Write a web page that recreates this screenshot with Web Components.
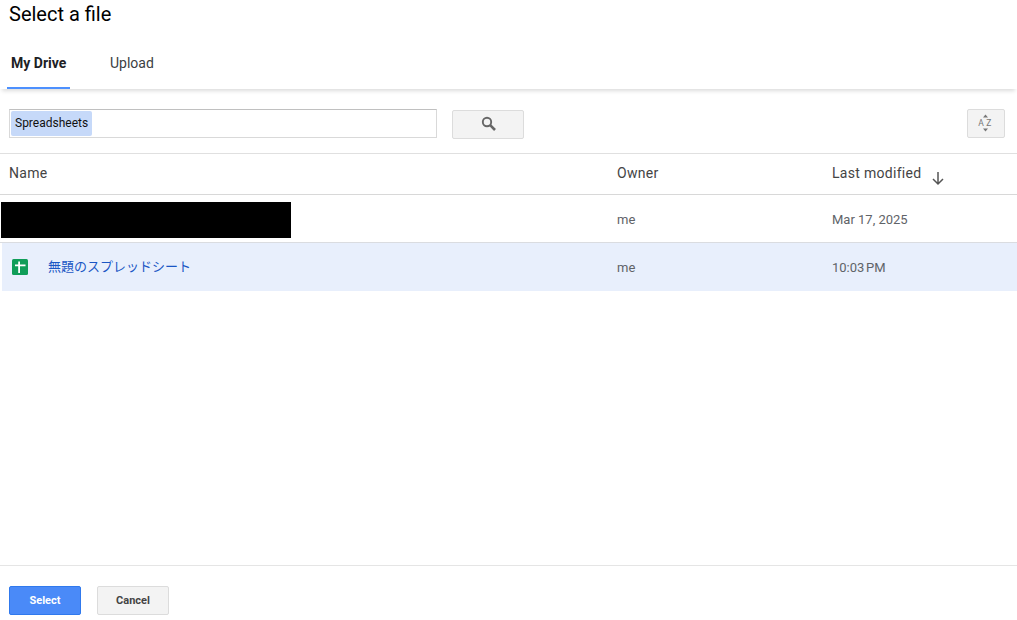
<!DOCTYPE html>
<html>
<head>
<meta charset="utf-8">
<title>Select a file</title>
<style>
    html, body { margin: 0; padding: 0; height: 100%; overflow: hidden; background: #fff; }
    body { font-family: Roboto, "Noto Sans CJK JP", sans-serif; }
</style>
</head>
<body>
<picker-dialog>
    <picker-tabs slot="tabs"></picker-tabs>
    <picker-toolbar slot="toolbar"></picker-toolbar>
    <picker-header slot="list"></picker-header>
    <picker-row slot="list" owner="me" modified="Mar 17, 2025" redacted></picker-row>
    <picker-row slot="list" owner="me" modified="10:03&#8239;PM" selected>無題のスプレッドシート</picker-row>
</picker-dialog>

<script>
// Web Components

class PickerDialog extends HTMLElement {
    connectedCallback() {
        let shadowRoot = this.attachShadow({mode: 'open'});
        shadowRoot.innerHTML = `
            <style>
                :host { display: flex; flex-direction: column; height: 620px; color: #000; }
                .title { height: 28px; padding-left: 9px; font-size: 20px; line-height: 28px; flex: none; }
                .list { flex: 1; }
                .footer { flex: none; height: 55px; box-sizing: border-box; border-top: 1px solid #e5e5e5; padding: 20px 0 0 9px; display: flex; gap: 16px; }
                button {
                    width: 72px; height: 29px; box-sizing: border-box; border-radius: 2px; padding: 0;
                    font: bold 11px Roboto, sans-serif; cursor: pointer;
                }
                .primary { background: #4a8af8; border: 1px solid #3079ed; color: #fff; }
                .plain { background: #f3f3f3; border: 1px solid #dcdcdc; color: #444; }
            </style>
            <div class="title">Select a file</div>
            <slot name="tabs"></slot>
            <slot name="toolbar"></slot>
            <div class="list"><slot name="list"></slot></div>
            <div class="footer">
                <button class="primary">Select</button>
                <button class="plain">Cancel</button>
            </div>
        `;
    }
}

class PickerTabs extends HTMLElement {
    connectedCallback() {
        let shadowRoot = this.attachShadow({mode: 'open'});
        shadowRoot.innerHTML = `
            <style>
                :host {
                    display: flex; height: 61px; padding-left: 7px; box-sizing: border-box; flex: none;
                    font-size: 14px; color: #3c4043;
                    box-shadow: 0 4px 4px -2px rgba(0,0,0,.14);
                    position: relative;
                }
                .tab { height: 61px; box-sizing: border-box; padding: 27px 4px 0; line-height: 16px; white-space: nowrap; }
                .active { width: 63px; font-weight: bold; color: #202124; border-bottom: 2px solid #4d90fe; }
                .other { margin-left: 36px; }
            </style>
            <div class="tab active">My Drive</div>
            <div class="tab other">Upload</div>
        `;
    }
}

class PickerToolbar extends HTMLElement {
    connectedCallback() {
        let shadowRoot = this.attachShadow({mode: 'open'});
        shadowRoot.innerHTML = `
            <style>
                :host {
                    display: flex; align-items: flex-start; height: 64px; box-sizing: border-box; flex: none;
                    padding: 20px 12px 0 9px;
                }
                .input {
                    width: 428px; height: 29px; box-sizing: border-box; padding: 1px;
                    border: 1px solid #d9d9d9; border-top-color: #c0c0c0;
                }
                .chip {
                    display: inline-block; width: 81px; height: 25px; box-sizing: border-box;
                    padding-left: 4px; background: #c6d9f9; border-radius: 2px;
                    font-size: 12px; line-height: 24px; color: #111;
                }
                .btn {
                    box-sizing: border-box; height: 29px; background: #f3f3f3; border: 1px solid #dcdcdc; border-radius: 2px;
                    display: flex; align-items: center; justify-content: center;
                }
                .search { width: 72px; margin: 1px 0 0 15px; }
                .search svg { margin: -1px 0 0 1px; }
                .sort { width: 38px; margin-left: auto; }
            </style>
            <div class="input"><span class="chip">Spreadsheets</span></div>
            <div class="btn search">
                <svg width="18" height="18" viewBox="0 0 18 18">
                    <circle cx="7" cy="7" r="4.2" fill="none" stroke="#666" stroke-width="1.9"/>
                    <path d="M10.2 10.2 L15 15" stroke="#666" stroke-width="2.6" fill="none"/>
                </svg>
            </div>
            <div class="btn sort">
                <svg width="22" height="24" viewBox="0 0 22 24">
                    <path d="M10.5 2.5 L13 5.5 H8 Z M10.5 19.5 L13 16.5 H8 Z" fill="#777"/>
                    <text x="11" y="14" text-anchor="middle" font-family="Roboto, sans-serif" font-size="8.5" letter-spacing="2.5" fill="#777">AZ</text>
                </svg>
            </div>
        `;
    }
}

class PickerHeader extends HTMLElement {
    connectedCallback() {
        let shadowRoot = this.attachShadow({mode: 'open'});
        shadowRoot.innerHTML = `
            <style>
                :host {
                    display: grid; grid-template-columns: 617px 215px 1fr; height: 42px; box-sizing: border-box;
                    border-top: 1px solid #e0e0e0; border-bottom: 1px solid #d8d8d8;
                    font-size: 14px; color: #444; line-height: 16px; letter-spacing: .3px;
                }
                div { padding-top: 11px; }
                .name { padding-left: 9px; }
                .mod { display: flex; }
                svg { margin: 3px 0 0 6px; }
            </style>
            <div class="name">Name</div>
            <div>Owner</div>
            <div class="mod">Last modified
                <svg width="20" height="20" viewBox="0 0 20 20">
                    <path d="M10 4 V16 M5 11 L10 16 L15 11" fill="none" stroke="#555" stroke-width="1.5"/>
                </svg>
            </div>
        `;
    }
}

class PickerRow extends HTMLElement {
    connectedCallback() {
        let redacted = this.hasAttribute('redacted');
        let shadowRoot = this.attachShadow({mode: 'open'});
        shadowRoot.innerHTML = `
            <style>
                :host {
                    display: grid; grid-template-columns: 617px 215px 1fr; align-items: center;
                    box-sizing: border-box; height: 48px; padding-top: 1px; border-bottom: 1px solid #dadce0;
                    font-size: 13px; color: #5f6368;
                }
                :host([selected]) {
                    background: linear-gradient(#e8effc, #e8effc) 2px 0 no-repeat;
                    padding-top: 0; border-bottom: none;
                }
                .name { display: flex; align-items: center; height: 100%; }
                .black { width: 290px; height: 36px; margin: 2px 0 0 1px; background: #000; }
                .icon { margin-left: 12px; flex: none; }
                .label { margin: -3px 0 0 20px; font-size: 13px; color: #1a56c4; font-family: Roboto, "Noto Sans CJK JP", sans-serif; }
            </style>
            <div class="name">
                ${redacted ? '<div class="black"></div>' : `
                <svg class="icon" width="16" height="16" viewBox="0 0 16 16">
                    <rect width="16" height="16" rx="1.5" fill="#0f9d58"/>
                    <path d="M3 5.5 H6.2 V2.5 H8 V5.5 H13.5 V7.2 H8 V14 H6.2 V7.2 H3 Z" fill="#fff"/>
                </svg>
                <span class="label"><slot></slot></span>`}
            </div>
            <div>${this.getAttribute('owner')}</div>
            <div>${this.getAttribute('modified')}</div>
        `;
    }
}

customElements.define('picker-dialog',  PickerDialog);
customElements.define('picker-tabs',    PickerTabs);
customElements.define('picker-toolbar', PickerToolbar);
customElements.define('picker-header',  PickerHeader);
customElements.define('picker-row',     PickerRow);
</script>
</body>
</html>
